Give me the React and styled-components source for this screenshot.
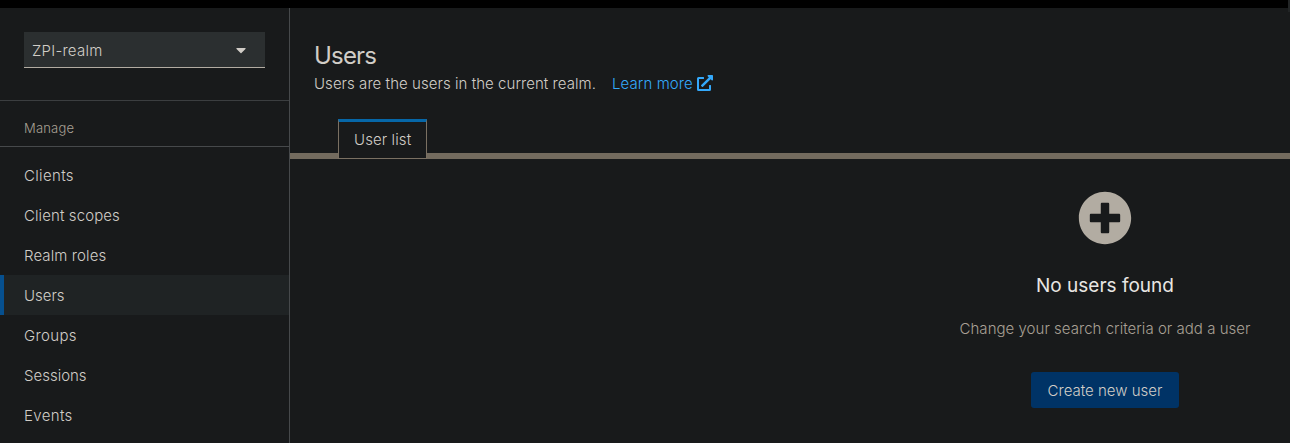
import React from 'react';
import styled, { createGlobalStyle } from 'styled-components';
import { FaCaretDown, FaExternalLinkAlt, FaPlusCircle } from 'react-icons/fa';

const GlobalStyle = createGlobalStyle`
  * { box-sizing: border-box; }
  body {
    margin: 0;
    background: #181a1b;
    color: #d1cdc7;
    font-family: Inter, "Noto Sans", sans-serif;
    font-size: 15px;
    font-weight: 300;
    line-height: 24px;
    overflow: hidden;
  }
`;

const Page = styled.div`
  height: 443px;
  display: flex;
  flex-direction: column;
  position: relative;
`;

const Masthead = styled.header`
  height: 8px;
  flex: none;
  background: #000;
`;

const ScrollThumb = styled.div`
  position: absolute;
  top: 0;
  right: 0;
  width: 2px;
  height: 12px;
  background: #222526;
`;

const Body = styled.div`
  flex: 1;
  display: flex;
  min-height: 0;
`;

const Sidebar = styled.nav`
  width: 290px;
  flex: none;
  border-right: 1px solid #46494b;
  overflow: hidden;
`;

const RealmArea = styled.div`
  height: 93px;
  padding: 24px;
  border-bottom: 1px solid #3b3e40;
`;

const RealmSelect = styled.button`
  display: flex;
  align-items: flex-start;
  justify-content: space-between;
  width: 241px;
  height: 36px;
  padding: 7px 19px 0 8px;
  border: 0;
  border-bottom: 1px solid #b2aca2;
  background: #2b2f30;
  color: inherit;
  font: inherit;
  svg { width: 10px; height: 16px; margin-top: 3px; }
`;

const Label = styled.span`
  letter-spacing: ${({ $spacing = 0 }) => $spacing}px;
  white-space: nowrap;
`;

const SectionTitle = styled.h2`
  height: 46px;
  margin: 0;
  padding: 15px 24px 0;
  border-bottom: 1px solid #46494b;
  color: #a8a095;
  font-size: 13px;
  font-weight: 300;
`;

const NavList = styled.ul`
  margin: 8px 0 0;
  padding: 0;
  list-style: none;
`;

const NavItem = styled.li`
  height: 40px;
  padding: 9px 20px 0;
  border-left: 4px solid ${({ $active }) => ($active ? '#06508f' : 'transparent')};
  background: ${({ $active }) => ($active ? '#1f2324' : 'transparent')};
`;

const Main = styled.main`
  flex: 1;
  min-width: 0;
`;

const PageHeader = styled.div`
  height: 111px;
  padding: 32px 24px 0;
`;

const Title = styled.h1`
  margin: 0;
  font-size: 24px;
  font-weight: 400;
  line-height: 32px;
`;

const Description = styled.div`
  display: flex;
  align-items: center;
  gap: 16px;
`;

const HelpLink = styled.a`
  display: flex;
  align-items: center;
  gap: 4px;
  color: #34a9fb;
  svg { width: 16px; height: 16px; margin-top: -2px; }
`;

const TabBar = styled.div`
  height: 40px;
  padding-left: 48px;
  background: linear-gradient(#736b5e, #736b5e) 0 34px / 100% 6px no-repeat;
`;

const Tab = styled.div`
  width: 89px;
  height: 40px;
  padding: 6px 0 0 15px;
  border: 1px solid #7a7062;
  border-top: 3px solid #0667a8;
  background: #181a1b;
`;

const EmptyState = styled.section`
  width: 370px;
  margin-left: 630px;
  padding-top: 32px;
  display: flex;
  flex-direction: column;
  align-items: center;
`;

const EmptyIcon = styled(FaPlusCircle)`
  width: 54px;
  height: 54px;
  color: #b2aca2;
`;

const EmptyTitle = styled.h3`
  margin: 26px 0 0;
  color: #e8e6e3;
  font-size: 19px;
  font-weight: 400;
  line-height: 30px;
`;

const EmptyText = styled.p`
  margin: 16px 0 0;
  color: #a8a095;
`;

const PrimaryButton = styled.button`
  width: 148px;
  height: 36px;
  margin-top: 31px;
  padding: 2px 0 0;
  border: 0;
  border-radius: 3px;
  background: #003366;
  color: #d1cdc7;
  font: inherit;
`;

const navItems = [
  { name: 'Clients', spacing: 0.35 },
  { name: 'Client scopes', spacing: 0.1 },
  { name: 'Realm roles', spacing: 0.1 },
  { name: 'Users', active: true },
  { name: 'Groups', spacing: 0.35 },
  { name: 'Sessions' },
  { name: 'Events', spacing: 0.35 },
];

export default function App() {
  return (
    <Page>
      <GlobalStyle />
      <Masthead />
      <ScrollThumb />
      <Body>
        <Sidebar>
          <RealmArea>
            <RealmSelect>
              <Label $spacing={0.25}>ZPI-realm</Label>
              <FaCaretDown />
            </RealmSelect>
          </RealmArea>
          <SectionTitle><Label $spacing={0.2}>Manage</Label></SectionTitle>
          <NavList>
            {navItems.map(({ name, active, spacing }) => (
              <NavItem key={name} $active={active}>
                <Label $spacing={spacing}>{name}</Label>
              </NavItem>
            ))}
          </NavList>
        </Sidebar>
        <Main>
          <PageHeader>
            <Title><Label $spacing={-0.8}>Users</Label></Title>
            <Description>
              <Label $spacing={0.05}>Users are the users in the current realm.</Label>
              <HelpLink>
                <Label $spacing={0.1}>Learn more</Label>
                <FaExternalLinkAlt />
              </HelpLink>
            </Description>
          </PageHeader>
          <TabBar>
            <Tab><Label $spacing={0.1}>User list</Label></Tab>
          </TabBar>
          <EmptyState>
            <EmptyIcon />
            <EmptyTitle><Label>No users found</Label></EmptyTitle>
            <EmptyText><Label $spacing={0.03}>Change your search criteria or add a user</Label></EmptyText>
            <PrimaryButton><Label>Create new user</Label></PrimaryButton>
          </EmptyState>
        </Main>
      </Body>
    </Page>
  );
}
